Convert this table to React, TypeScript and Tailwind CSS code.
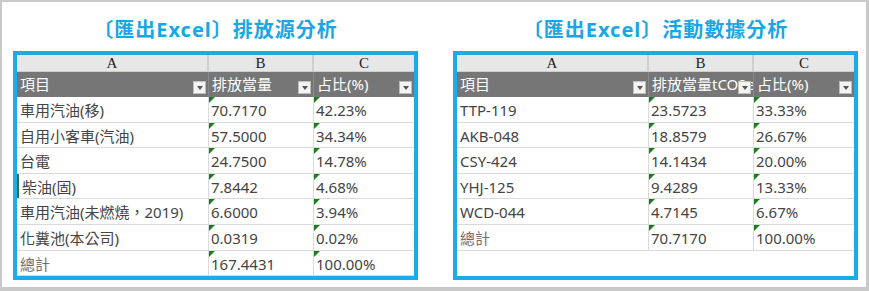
const font = { fontFamily: '"Noto Sans", "Noto Sans CJK TC", sans-serif' };

type Row = { item: string; value: string; pct: string; mark?: boolean };

const emissionRows: Row[] = [
  { item: '車用汽油(移)', value: '70.7170', pct: '42.23%' },
  { item: '自用小客車(汽油)', value: '57.5000', pct: '34.34%' },
  { item: '台電', value: '24.7500', pct: '14.78%' },
  { item: '柴油(固)', value: '7.8442', pct: '4.68%', mark: true },
  { item: '車用汽油(未燃燒，2019)', value: '6.6000', pct: '3.94%' },
  { item: '化糞池(本公司)', value: '0.0319', pct: '0.02%' },
  { item: '總計', value: '167.4431', pct: '100.00%' },
];

const activityRows: Row[] = [
  { item: 'TTP-119', value: '23.5723', pct: '33.33%' },
  { item: 'AKB-048', value: '18.8579', pct: '26.67%' },
  { item: 'CSY-424', value: '14.1434', pct: '20.00%' },
  { item: 'YHJ-125', value: '9.4289', pct: '13.33%' },
  { item: 'WCD-044', value: '4.7145', pct: '6.67%' },
  { item: '總計', value: '70.7170', pct: '100.00%' },
];

function Dropdown() {
  return (
    <div className="absolute right-[2px] bottom-[3px] w-[13px] h-[13px] bg-[#f4f4f4] border border-[#bdbdbd] flex items-center justify-center">
      <div className="w-0 h-0 border-l-[3.5px] border-r-[3.5px] border-t-[4px] border-l-transparent border-r-transparent border-t-[#555]" />
    </div>
  );
}

// green "number stored as text" corner marker
function Flag() {
  return (
    <div className="absolute left-0 top-0 w-0 h-0 border-t-[6px] border-r-[6px] border-t-[#1b7d1b] border-r-transparent" />
  );
}

function Sheet({ header2, rows }: { header2: string; rows: Row[] }) {
  return (
    <div className="w-[405px] h-[229px] border-4 border-[#19ace8] bg-white flex flex-col">
      <div className="flex h-[17px] bg-[#e7e7e7] border-b border-[#cfcfcf] text-[15px] leading-[16px] text-[#222]" style={{ fontFamily: '"Liberation Serif", serif' }}>
        <div className="w-[192px] text-center border-r-2 border-[#cfcfcf]">A</div>
        <div className="w-[105px] text-center border-r-2 border-[#cfcfcf]">B</div>
        <div className="w-[100px] text-center">C</div>
      </div>
      <div className="flex h-[25px] bg-[#767676] text-white text-[15px] leading-[25px]">
        <div className="relative w-[192px] pl-[3px] border-r border-[#8a8a8a] overflow-hidden whitespace-nowrap">
          項目
          <Dropdown />
        </div>
        <div className="relative w-[105px] pl-[3px] border-r border-[#8a8a8a] overflow-hidden whitespace-nowrap">
          {header2}
          <Dropdown />
        </div>
        <div className="relative w-[100px] pl-[3px] overflow-hidden whitespace-nowrap">
          占比(%)
          <Dropdown />
        </div>
      </div>
      {rows.map((r, i) => {
        const total = i === rows.length - 1 && r.item === '總計';
        return (
          <div key={r.item} className="flex h-[25.6px] border-b border-[#dadada] text-[15px] leading-[26px] text-[#444]">
            <div className={`w-[192px] pl-[3px] border-r border-[#dadada] whitespace-nowrap ${total ? 'text-[#707070]' : ''} ${r.mark ? 'border-l-2 border-l-[#2e6e3a] pl-[1px]' : ''}`}>
              {r.item}
            </div>
            <div className="relative w-[105px] pl-[2px] border-r border-[#dadada]">
              <Flag />
              {r.value}
            </div>
            <div className="relative w-[100px] pl-[2px]">
              <Flag />
              {r.pct}
            </div>
          </div>
        );
      })}
    </div>
  );
}

function Panel({ title, header2, rows }: { title: string; header2: string; rows: Row[] }) {
  return (
    <div className="flex flex-col items-center">
      <div className="h-[28px] mb-[7px] text-[20px] leading-[28px] font-bold tracking-[1px] text-[#1aa6e4] whitespace-nowrap">{title}</div>
      <Sheet header2={header2} rows={rows} />
    </div>
  );
}

export default function App() {
  return (
    <div className="w-[869px] h-[291px] bg-white" style={font}>
      <div className="w-full h-full border-t-2 border-l-2 border-r-[3px] border-b-4 border-[#c9c9c9] pt-[14px] pl-[11px] flex gap-[35px]">
        <Panel title="〔匯出Excel〕排放源分析" header2="排放當量" rows={emissionRows} />
        <Panel title="〔匯出Excel〕活動數據分析" header2="排放當量tCO2e" rows={activityRows} />
      </div>
    </div>
  );
}
